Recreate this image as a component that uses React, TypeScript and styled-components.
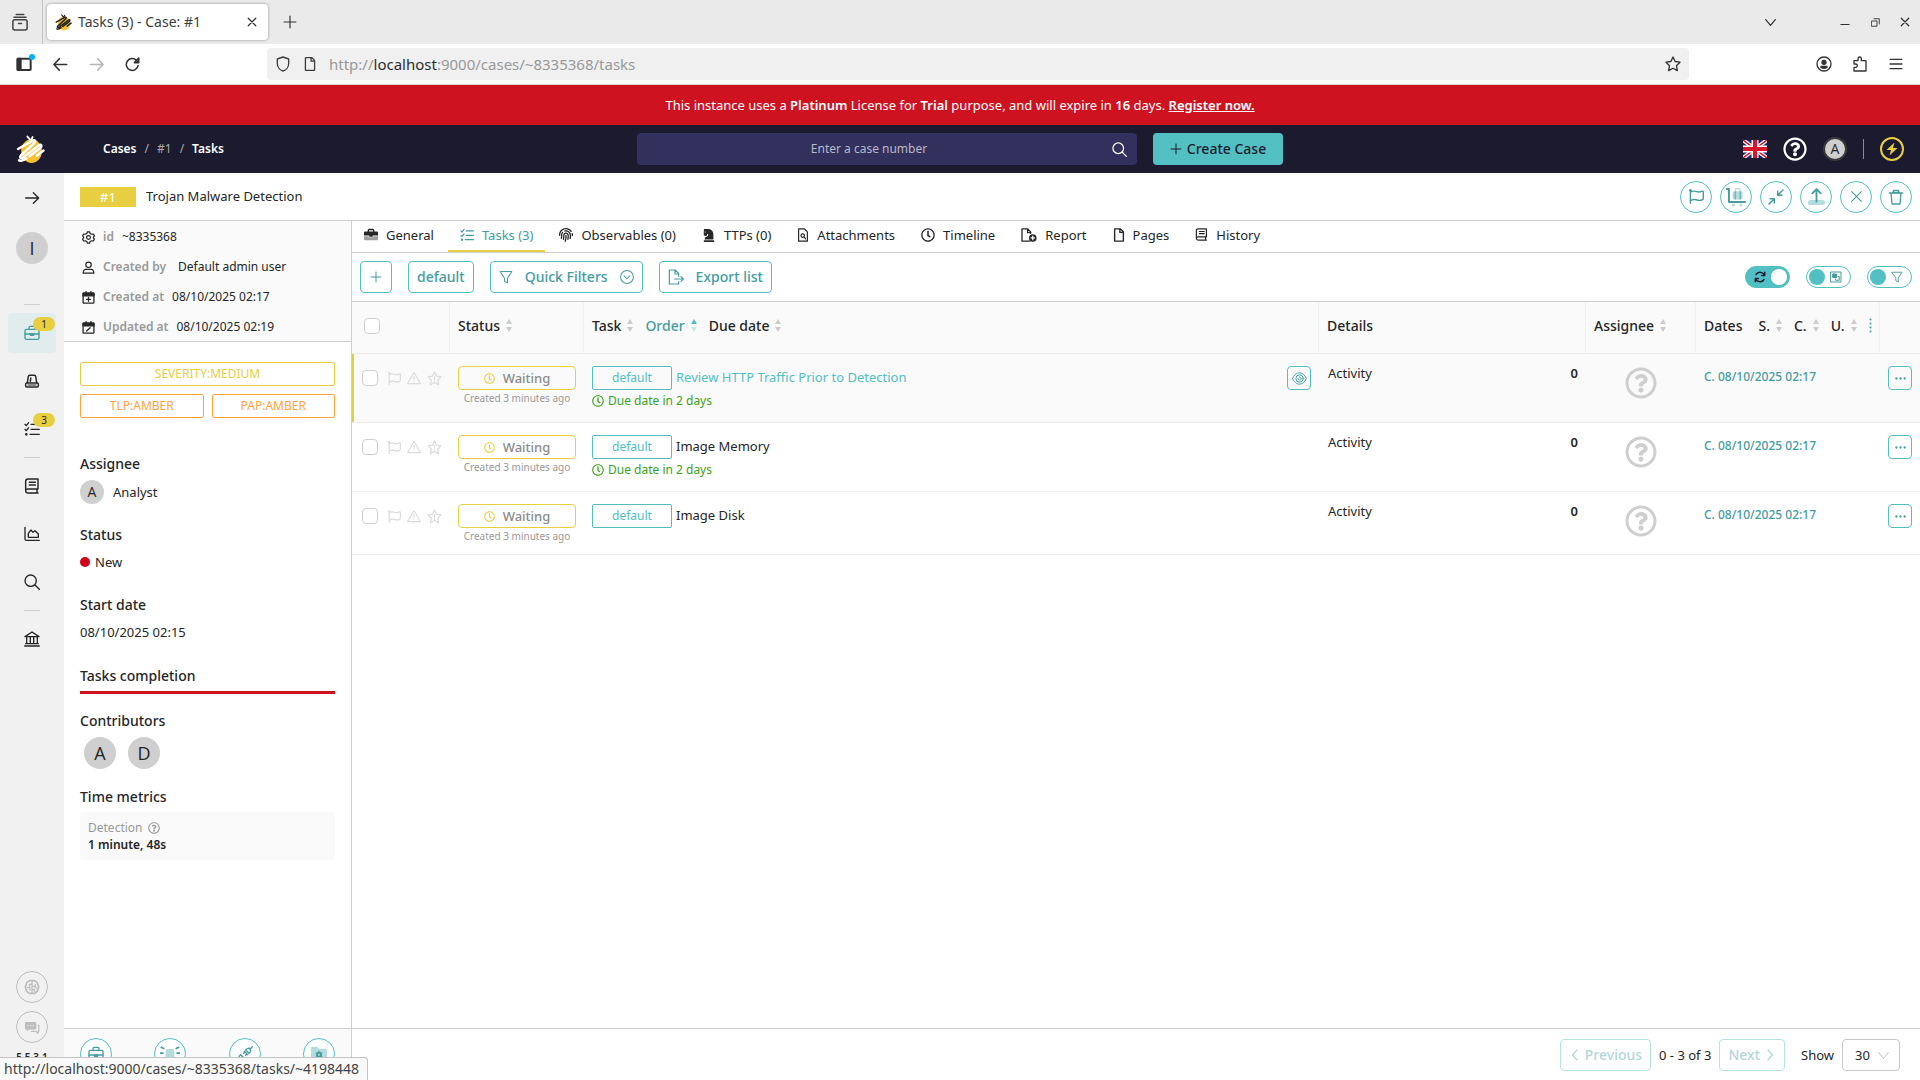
import React from "react";
import styled, { createGlobalStyle } from "styled-components";
import {
  FaFingerprint, FaChessKnight, FaRegFlag, FaRegQuestionCircle, FaRegClock,
  FaRegFile,
} from "react-icons/fa";

const c = {
  ink: "#262626",
  grey: "#999999",
  line: "#cfcfcf",
  soft: "#f0f0f0",
  panel: "#fafafa",
  teal: "#52c0c2",
  tealDark: "#469c9e",
  tealPale: "#b5dcdc",
  yellow: "#e8cf42",
  amber: "#ffa53d",
  red: "#ce1220",
  green: "#3ba31c",
  navy: "#1b1a2f",
};

const GlobalStyle = createGlobalStyle`
  *, *::before, *::after { box-sizing: border-box; }
  body { margin: 0; }
  body, button, input, select, table {
    font-family: "Noto Sans", "Open Sans", sans-serif;
    font-size: 13px;
    line-height: 20px;
    color: ${c.ink};
  }
  button { cursor: pointer; padding: 0; border: 0; background: none; }
  a { color: inherit; text-decoration: none; }
  svg { display: block; flex: none; }
`;

/* ---------- drawing helpers ---------- */

type DrawProps = { w: number; h?: number; box?: string; sw?: number; children: React.ReactNode };
const Draw = ({ w, h, box = "0 0 24 24", sw = 2, children }: DrawProps) => (
  <svg width={w} height={h ?? w} viewBox={box} fill="none" stroke="currentColor" strokeWidth={sw}
    strokeLinecap="round" strokeLinejoin="round" aria-hidden="true">
    {children}
  </svg>
);

const BeeLogo = ({ size, stripe }: { size: number; stripe: string }) => (
  <Draw w={size} box="0 0 28 28" sw={2.4}>
    <ellipse cx="15" cy="15.5" rx="10" ry="11.5" fill="#fbc02d" stroke="none" />
    <path d="M11 1.5 14 5M16 2l-1.500 3.500" stroke={stripe} strokeWidth="1.800" />
    <path d="M2 13.500 16 5.500c2.500-1 3.500.5 1.500 2.500L5 19.500c-2 2-1 3.500 1.500 2.500L22 10c2.500-1.500 3.500.5 1.500 2.500L13 20.500" stroke={stripe} />
    <path d="M3 24.500c2 1 4 .5 7-2M26.500 15 20 20" stroke={stripe} />
  </Draw>
);

const Briefcase = ({ w = 16, sw = 2 }: { w?: number; sw?: number }) => (
  <Draw w={w} sw={sw}>
    <rect x="1.5" y="6.5" width="21" height="15" rx="2" />
    <path d="M7.5 6.5V4a2 2 0 0 1 2-2h5a2 2 0 0 1 2 2v2.5M1.5 13.5h21" />
    <path d="M9.5 13.5v2h5v-2Z" fill="currentColor" />
  </Draw>
);
const BriefcaseSolid = () => (
  <Draw w={14}>
    <path d="M7.5 6V4A1.500 1.500 0 0 1 9 2.500h6A1.500 1.500 0 0 1 16.500 4v2" strokeWidth="2.500" />
    <path d="M2 6h20a2 2 0 0 1 2 2v5h-9v2H9v-2H0V8a2 2 0 0 1 2-2Z" fill="currentColor" stroke="none" />
    <path d="M0 14h8v2h8v-2h8v5a2 2 0 0 1-2 2H2a2 2 0 0 1-2-2Z" fill="currentColor" stroke="none" opacity=".45" />
  </Draw>
);
const Checklist = ({ w = 16 }: { w?: number }) => (
  <Draw w={w} sw={2}>
    <path d="m1.500 5 2 2L7 2.500M1.500 12.500l2 2L7 10M10.500 5H23M10.500 12.500H23M9 20h14" />
    <circle cx="3.500" cy="20" r="1" fill="currentColor" />
  </Draw>
);
const Siren = () => (
  <Draw w={16} sw={2.2}>
    <path d="M5 14.500 6.500 5a2 2 0 0 1 2-1.500h7a2 2 0 0 1 2 1.500L19 14.500M9.500 12.500l.7-5" />
    <rect x="2.500" y="15" width="19" height="6" rx="1.500" />
    <path d="M6 18h12" strokeWidth="1.500" />
  </Draw>
);
const Book = ({ w = 16 }: { w?: number }) => (
  <Draw w={w} sw={2.200}>
    <path d="M21 1.500H6A3.500 3.500 0 0 0 2.500 5v14A3.500 3.500 0 0 0 6 22.500h15M21 1.500v15H6A3 3 0 0 0 2.500 19M19.500 16.500v6M8 6.500h9M8 10.500h9" />
  </Draw>
);
const AreaChart = () => (
  <Draw w={16}>
    <path d="M1.500 2v17.500a2 2 0 0 0 2 2H23M6.500 17v-6l4-5 3 3.500 3-2.500 5 5v5Z" />
  </Draw>
);
const Search = ({ w = 16, sw = 2 }: { w?: number; sw?: number }) => (
  <Draw w={w} sw={sw}><circle cx="10" cy="10" r="8.500" /><path d="m16.500 16.500 6.500 6.500" /></Draw>
);
const Bank = () => (
  <Draw w={16} sw={2}>
    <path d="M1.500 8.500 12 1.500l10.500 7ZM4 9v9M9.500 9v9M14.500 9v9M20 9v9M2.500 19h19M1 22.500h22" />
  </Draw>
);
const ArrowRight = ({ w = 18 }: { w?: number }) => (
  <Draw w={w}><path d="M2.500 12h19M14 4l8 8-8 8" /></Draw>
);
const Gear = () => (
  <Draw w={13} sw={2.2}>
    <path d="m9 4.500 1-3h4l1 3 3 1.500 3-.5 2 3.500-2 2.300v1.400l2 2.300-2 3.500-3-.5-3 1.500-1 3h-4l-1-3-3-1.500-3 .5L1 15l2-2.300v-1.400L1 9l2-3.500 3 .5Z" />
    <circle cx="12" cy="12" r="3.500" />
  </Draw>
);
const UserLine = () => (
  <Draw w={13} sw={2.2}>
    <circle cx="12" cy="7" r="5" /><path d="M2 22.500h20c-.5-4-2-7-5-7H7c-3 0-4.500 3-5 7Z" />
  </Draw>
);
const Calendar = ({ mark }: { mark: string }) => (
  <Draw w={13} sw={2.400}>
    <rect x="2" y="4" width="20" height="18.500" rx="1.500" />
    <path d="M2 4h20v5H2Z" fill="currentColor" /><path d="M7.500 1v4M16.500 1v4" /><path d={mark} />
  </Draw>
);
const Funnel = ({ w = 14 }: { w?: number }) => (
  <Draw w={w} sw={1.800}><path d="M2 2.500h20L14.500 14v8l-5-3v-5Z" /></Draw>
);
const FileExport = () => (
  <Draw w={16} sw={1.800}>
    <path d="M16 11V7l-5-5.500H2v21h14V19M10.500 1.500V7.500H16M10 15h13M19.500 11.500 23 15l-3.500 3.500" />
  </Draw>
);
const FileSearch = () => (
  <Draw w={12} h={14} box="0 0 18 24" sw={2}>
    <path d="M1.500 1.500h10l5 5v16h-15Z" /><circle cx="8.500" cy="13" r="3" /><path d="m11 15.500 2.500 3" />
  </Draw>
);
const FilePlus = () => (
  <Draw w={16} h={14} box="0 0 27 24" sw={2.200}>
    <path d="M15 22.500H1.500v-21h10l5 5.500v2M11 1.500V8h5" />
    <circle cx="20" cy="17" r="6.500" fill="currentColor" stroke="none" />
    <path d="M20 14v6M17 17h6" stroke="#fff" />
  </Draw>
);
const Caret = ({ dir, bold }: { dir: "l" | "r" | "d"; bold?: boolean }) => (
  <Draw w={dir === "d" ? 11 : 12} sw={bold || dir !== "d" ? 2.600 : 2}>
    <path d={dir === "l" ? "m16 2-9 10 9 10" : dir === "r" ? "m8 2 9 10-9 10" : "m1.500 5.500 10.500 13 10.500-13"} />
  </Draw>
);
const Cross = ({ w, sw }: { w: number; sw?: number }) => <Draw w={w} sw={sw}><path d="m3 3 18 18M21 3 3 21" /></Draw>;
const Plus = ({ w }: { w: number }) => <Draw w={w}><path d="M12 2v20M2 12h20" /></Draw>;
const Trash = () => (
  <Draw w={16} sw={2}>
    <path d="M2 6h20M4.500 6 6 22.500h12L19.500 6" /><path d="M7 5.500 8.500 2h7L17 5.500Z" fill={c.tealPale} />
  </Draw>
);
const Cart = () => (
  <Draw w={20} sw={2.400}>
    <path d="M1 2.500h2.500V18H23" />
    <rect x="8" y="5" width="12" height="10" rx="2" fill={c.tealPale} stroke="none" />
    <path d="M11.500 5V2h5v3" stroke={c.tealPale} strokeWidth="1.500" />
    <path d="M11 5.500v9M17 5.500v9" strokeWidth="1" />
    <circle cx="9" cy="21.500" r="1.800" fill={c.tealPale} stroke="none" />
    <circle cx="18" cy="21.500" r="1.800" fill={c.tealPale} stroke="none" />
  </Draw>
);
const Collapse = () => (
  <Draw w={16} sw={2.200}>
    <path d="M22.500 1.500 14.500 9.500M14.500 3v6.500H21M1.500 22.500l8-8M9.500 21v-6.500H3" />
  </Draw>
);
const UploadPad = () => (
  <Draw w={17} sw={2.600}>
    <rect x="0" y="17" width="24" height="7" rx="3" fill={c.tealPale} stroke="none" />
    <path d="M12 19V2M6 7.500l6-6 6 6" />
  </Draw>
);
const Refresh = () => (
  <Draw w={12} sw={2.800}>
    <path d="M21 9A9.500 9.500 0 0 0 4 7M3 15a9.500 9.500 0 0 0 17 2M21.500 2.500V9H15M2.500 21.500V15H9" />
  </Draw>
);
const Group = () => (
  <Draw w={12} sw={2}>
    <rect x="2" y="2" width="20" height="20" />
    <path d="M6 6h7v7H6Z" fill="currentColor" /><path d="M16 11h2.500v7.500H11V16" />
  </Draw>
);
const FlagUk = () => (
  <svg width="24" height="18" viewBox="0 0 24 18" aria-hidden="true">
    <rect width="24" height="18" fill="#16257a" />
    <path d="m0 0 24 18M24 0 0 18" stroke="#fff" strokeWidth="4" />
    <path d="m0 0 24 18M24 0 0 18" stroke="#d8152b" strokeWidth="1.500" />
    <path d="M12 0v18M0 9h24" stroke="#fff" strokeWidth="7" />
    <path d="M12 0v18M0 9h24" stroke="#d8152b" strokeWidth="4" />
  </svg>
);
const WarnLine = () => (
  <Draw w={14}><path d="M12 2.500 23 21.500H1ZM12 9v5.500M12 17.500v.5" /></Draw>
);
const StarLine = () => (
  <Draw w={15}>
    <path d="m12 1.500 3.200 6.800 7.300 1-5.300 5.200 1.300 7.500L12 18.400 5.500 22l1.300-7.500L1.500 9.300l7.300-1ZM12 9v4M12 15.500v.5" />
  </Draw>
);
const Eye = () => (
  <Draw w={15} sw={1.600}>
    <path d="M1 12c2.500-6 6.500-9 11-9s8.500 3 11 9c-2.500 6-6.500 9-11 9S3.500 18 1 12Z" />
    <circle cx="12" cy="12" r="5.800" /><path d="M12 9.500a2.500 2.500 0 1 1-2.500 2.500" />
  </Draw>
);
const Brain = () => (
  <Draw w={16} sw={2.600}>
    <path d="M8 2.500h8l4 3 2 6.500-2 6.500-4 3H8l-4-3L2 12l2-6.500Z" />
    <path d="M12 3v18M12 8H8v3M5 13h4v4M12 11h5V8M12 16h4v3M16 13.500h4" strokeWidth="1.800" />
  </Draw>
);
const Chats = () => (
  <Draw w={15}>
    <path d="M2 3h14a2 2 0 0 1 2 2v8a2 2 0 0 1-2 2H7l-4 3v-3H2a2 2 0 0 1-2-2V5a2 2 0 0 1 2-2Z" fill="currentColor" stroke="none" />
    <path d="M21 8.500h1v9.500h-1v3l-4-3H10" />
    <path d="M4.500 9h.2M9 9h.2M13.500 9h.2" stroke="#f1f1f1" />
  </Draw>
);
const SirenDuo = () => (
  <Draw w={20} sw={2}>
    <path d="M6 24 7 8a2 2 0 0 1 2-2h6a2 2 0 0 1 2 2l1 16Z" fill={c.tealPale} stroke="none" />
    <path d="m1.500 4 3 1.500M.500 11h3M22.500 4l-3 1.500M23.500 11h-3" />
  </Draw>
);
const PlugLine = () => (
  <Draw w={16} sw={2}>
    <path d="M13 6l5 5c2.500-2 3-4.500 1.500-6.500S15 3.500 13 6ZM20 4l3-3M11 8l5 5M12 9l-2 2M15 12l-2 2M10.500 18 5.500 13c-2.500 2-3 4.500-1.500 6.500S8.500 20.500 10.500 18ZM4 20l-3 3" />
  </Draw>
);
const FolderGear = () => (
  <Draw w={16}>
    <path d="M2 1h7l3 3h10a2 2 0 0 1 2 2v15a2 2 0 0 1-2 2H2a2 2 0 0 1-2-2V3a2 2 0 0 1 2-2Z" fill={c.tealPale} stroke="none" />
    <circle cx="12" cy="13" r="3" strokeWidth="3" />
    <path d="M12 7.500v11M7.500 10.500l9 5M16.500 10.500l-9 5" strokeWidth="1.500" />
    <circle cx="12" cy="13" r="1.500" fill={c.tealPale} stroke="none" />
  </Draw>
);

/* ---------- browser chrome ---------- */

const Page = styled.div`
  display: flex;
  flex-direction: column;
  height: 100vh;
  overflow: hidden;
  background: #fff;
`;
const TabStrip = styled.div`
  display: flex;
  align-items: center;
  height: 44px;
  background: #eaeaea;
  color: #3d3d3d;
  font-size: 14px;
`;
const RecentBox = styled.button`
  display: grid;
  place-items: center;
  width: 43px;
  height: 44px;
  padding-right: 3px;
  border-right: 1px solid #c4c4c4;
  color: #444;
`;
const BrowserTab = styled.div`
  display: flex;
  align-items: center;
  width: 221px;
  height: 36px;
  margin: 0 10px 0 4px;
  padding: 0 4px 0 8px;
  gap: 6px;
  border-radius: 4px;
  background: #fff;
  box-shadow: 0 0 3px rgba(0, 0, 0, 0.4);
  span { flex: 1; }
`;
const ChromeButton = styled.button<{ $w?: number; $dim?: boolean }>`
  display: grid;
  place-items: center;
  position: relative;
  width: ${(p) => p.$w ?? 24}px;
  height: 24px;
  color: ${(p) => (p.$dim ? "#b5b5b5" : "#333")};
`;
const WindowButtons = styled.div`
  display: flex;
  align-items: center;
  margin-left: auto;
  gap: 6px;
  padding-right: 3px;
  & > :first-child { margin-right: 45px; }
`;
const NavBar = styled.div`
  display: grid;
  grid-template-columns: 267px 1fr 231px;
  align-items: center;
  height: 41px;
  border-bottom: 1px solid #d9d9d9;
`;
const NavGroup = styled.div<{ $end?: boolean }>`
  display: flex;
  gap: 12px;
  padding: 0 12px;
  justify-content: ${(p) => (p.$end ? "flex-end" : "flex-start")};
`;
const Dot = styled.i`
  position: absolute;
  top: 2px;
  right: 1px;
  width: 6px;
  height: 6px;
  border-radius: 50%;
  background: #00b3ff;
`;
const UrlField = styled.div`
  display: flex;
  align-items: center;
  height: 32px;
  padding: 0 7px 0 8px;
  gap: 12px;
  border-radius: 4px;
  background: #f0f0f0;
  color: #3d3d3d;
`;
const UrlText = styled.div`
  flex: 1;
  font-size: 15px;
  color: #999;
  outline: none;
  b { font-weight: 400; color: #2e2e2e; }
`;
const StatusBubble = styled.div`
  position: fixed;
  left: 0;
  bottom: 0;
  padding: 0 8px 0 4px;
  border: 1px solid #c4c4c4;
  border-width: 1px 1px 0 0;
  border-radius: 0 4px 0 0;
  background: #f9f9f9;
  color: #444;
  font-size: 14px;
  line-height: 22px;
`;

/* ---------- application header ---------- */

const LicenseBanner = styled.div`
  display: flex;
  align-items: center;
  justify-content: center;
  height: 40px;
  background: ${c.red};
  color: #fff;
  p { margin: 0; }
  b { font-weight: 600; }
  a { font-weight: 600; text-decoration: underline; }
`;
const AppHeader = styled.header`
  display: grid;
  grid-template-columns: 1fr auto 1fr;
  align-items: center;
  height: 48px;
  padding: 0 16px;
  background: ${c.navy};
  color: #fff;
`;
const HeaderSide = styled.div<{ $end?: boolean }>`
  display: flex;
  align-items: center;
  gap: ${(p) => (p.$end ? 16 : 58)}px;
  justify-content: ${(p) => (p.$end ? "flex-end" : "flex-start")};
`;
const Crumbs = styled.nav`
  display: flex;
  gap: 8px;
  font-size: 12px;
  font-weight: 600;
  span { font-weight: 400; color: #aaa; }
`;
const SearchGroup = styled.div`
  display: flex;
  gap: 16px;
`;
const SearchBox = styled.form`
  display: flex;
  width: 500px;
  height: 32px;
  border-radius: 4px;
  background: #32305c;
  input {
    flex: 1;
    border: 0;
    background: none;
    color: #fff;
    font-size: 12px;
    text-align: center;
    outline: none;
  }
  input::placeholder { color: #b9b8c8; opacity: 1; }
  button { display: grid; place-items: center; width: 36px; color: #fff; }
`;
const CreateButton = styled.button`
  display: flex;
  align-items: center;
  justify-content: center;
  gap: 5px;
  width: 130px;
  height: 32px;
  border-radius: 4px;
  background: ${c.teal};
  color: ${c.navy};
  font-size: 14px;
  font-weight: 500;
`;
const HeaderIcon = styled.button<{ $tone?: string }>`
  display: grid;
  place-items: center;
  min-width: 24px;
  height: 24px;
  color: ${(p) => p.$tone ?? "#fff"};
`;
const Rule = styled.i`
  width: 1px;
  height: 20px;
  background: #8a8a94;
`;
const Avatar = styled.span<{ $size: number; $ring?: boolean }>`
  display: grid;
  place-items: center;
  flex: none;
  width: ${(p) => p.$size}px;
  height: ${(p) => p.$size}px;
  border-radius: 50%;
  border: ${(p) => (p.$ring ? "2px solid #3a3a3a" : "0")};
  background: #cfcfcf;
  color: ${c.ink};
  font-family: "Open Sans", "Noto Sans", sans-serif;
  font-size: ${(p) => (p.$size > 24 ? 18 : 14)}px;
`;

/* ---------- rail ---------- */

const Workspace = styled.div`
  display: grid;
  grid-template-columns: 64px 1fr;
  flex: 1;
  min-height: 0;
`;
const Rail = styled.nav`
  display: flex;
  flex-direction: column;
  align-items: center;
  gap: 8px;
  padding: 9px 0 17px;
  background: #f1f1f1;
  hr { width: 16px; height: 1px; margin: 0; border: 0; background: ${c.line}; }
`;
const RailTop = styled.div`
  display: flex;
  flex-direction: column;
  align-items: center;
  gap: 26px;
  padding: 8px 0 32px;
`;
const RailItem = styled.a<{ $on?: boolean }>`
  display: grid;
  place-items: center;
  position: relative;
  width: 48px;
  height: 40px;
  border-radius: 4px;
  background: ${(p) => (p.$on ? "#e1eded" : "transparent")};
  color: ${(p) => (p.$on ? c.tealDark : c.ink)};
`;
const Badge = styled.span`
  position: absolute;
  top: 4px;
  right: 1px;
  width: 22px;
  border-radius: 7px;
  background: ${c.yellow};
  color: ${c.ink};
  font-size: 10px;
  line-height: 14px;
  text-align: center;
`;
const RailFoot = styled.div`
  display: flex;
  flex-direction: column;
  align-items: center;
  gap: 8px;
  margin-top: auto;
  small { font-size: 10px; font-weight: 600; line-height: 12px; }
`;
const RoundButton = styled.button<{ $muted?: boolean }>`
  display: grid;
  place-items: center;
  width: 32px;
  height: 32px;
  border: 1px solid ${(p) => (p.$muted ? "#bdbdbd" : c.teal)};
  border-radius: 50%;
  background: ${(p) => (p.$muted ? "transparent" : "#fff")};
  color: ${(p) => (p.$muted ? "#bdbdbd" : c.tealDark)};
`;

/* ---------- case ---------- */

const CaseView = styled.div`
  display: flex;
  flex-direction: column;
  min-width: 0;
  min-height: 0;
`;
const CaseTitle = styled.div`
  display: flex;
  align-items: center;
  gap: 10px;
  height: 48px;
  padding: 0 8px 0 16px;
  border-bottom: 1px solid ${c.line};
  h1 { flex: 1; margin: 0; padding-bottom: 2px; font-size: 13px; font-weight: 400; }
`;
const CaseNumber = styled.span`
  width: 56px;
  background: ${c.yellow};
  color: #fff;
  text-align: center;
`;
const CaseActions = styled.div`
  display: flex;
  gap: 8px;
`;
const CaseBody = styled.div`
  display: grid;
  grid-template-columns: 288px 1fr;
  flex: 1;
  min-height: 0;
`;
const InfoPanel = styled.aside`
  display: flex;
  flex-direction: column;
  min-height: 0;
  border-right: 1px solid ${c.line};
`;
const Meta = styled.dl`
  display: flex;
  flex-direction: column;
  gap: 10px;
  margin: 0;
  padding: 6px 18px 4px;
  border-bottom: 1px solid ${c.line};
  background: ${c.panel};
  font-size: 12px;
  div { display: flex; align-items: center; gap: 8px; }
  dt { font-weight: 600; color: ${c.grey}; }
  dd { margin: 0; }
`;
const UserValue = styled.dd`
  && { margin-left: 4px; }
`;
const Details = styled.div`
  display: flex;
  flex-direction: column;
  flex: 1;
  padding: 20px 16px;
`;
const TagGrid = styled.div`
  display: grid;
  grid-template-columns: 1fr 1fr;
  gap: 8px;
  margin-bottom: 36px;
`;
const Tag = styled.span<{ $tone: string; $wide?: boolean }>`
  grid-column: ${(p) => (p.$wide ? "1 / -1" : "auto")};
  border: 1px solid ${(p) => p.$tone};
  border-radius: 2px;
  color: ${(p) => p.$tone};
  font-size: 12px;
  line-height: 22px;
  text-align: center;
`;
const Field = styled.section<{ $after: number; $gap?: number }>`
  display: flex;
  flex-direction: column;
  gap: ${(p) => p.$gap ?? 7}px;
  margin-bottom: ${(p) => p.$after}px;
  h2 { margin: 0; font-size: 14px; font-weight: 500; line-height: 20px; }
`;
const Inline = styled.div<{ $gap: number; $pad?: number }>`
  display: flex;
  align-items: center;
  gap: ${(p) => p.$gap}px;
  padding-left: ${(p) => p.$pad ?? 0}px;
`;
const StatusDot = styled.i`
  width: 10px;
  height: 10px;
  border-radius: 50%;
  background: #d0021b;
`;
const Progress = styled.div`
  height: 3px;
  background: ${c.red};
`;
const Metric = styled.div`
  height: 48px;
  padding: 7px 8px;
  border-radius: 4px;
  background: ${c.panel};
  font-size: 12px;
  line-height: 17px;
  color: ${c.grey};
  b { font-weight: 600; color: ${c.ink}; }
`;
const InfoFoot = styled.div`
  display: flex;
  justify-content: space-between;
  height: 52px;
  padding: 9px 16px;
  border-top: 1px solid ${c.line};
  background: ${c.panel};
`;

/* ---------- tasks ---------- */

const TaskPane = styled.main`
  display: flex;
  flex-direction: column;
  min-width: 0;
  min-height: 0;
`;
const Tabs = styled.nav`
  display: flex;
  gap: 2px;
  height: 32px;
  border-bottom: 1px solid ${c.line};
`;
const TabLink = styled.a<{ $on?: boolean }>`
  display: flex;
  align-items: center;
  gap: 8px;
  padding: 0 12px 2px;
  border-bottom: 2px solid ${(p) => (p.$on ? c.yellow : "transparent")};
  color: ${(p) => (p.$on ? c.tealDark : c.ink)};
`;
const Toolbar = styled.div`
  display: flex;
  align-items: center;
  gap: 16px;
  height: 49px;
  padding: 0 8px;
  border-bottom: 1px solid ${c.line};
`;
const OutlineButton = styled.button<{ $gap?: number }>`
  display: flex;
  align-items: center;
  justify-content: center;
  gap: ${(p) => p.$gap ?? 12}px;
  min-width: 32px;
  height: 32px;
  padding: 0 8px;
  border: 1px solid ${c.teal};
  border-radius: 4px;
  background: #fff;
  color: ${c.tealDark};
  font-size: 14px;
  font-weight: 500;
  &:disabled { border-color: #b5e4e5; color: #b5d7d8; cursor: default; }
`;
const Toggles = styled.div`
  display: flex;
  gap: 16px;
  margin-left: auto;
`;
const Toggle = styled.label<{ $on?: boolean }>`
  display: flex;
  flex-direction: ${(p) => (p.$on ? "row-reverse" : "row")};
  align-items: center;
  justify-content: space-between;
  width: 45px;
  height: 22px;
  padding: 0 ${(p) => (p.$on ? "2px 0 8px" : "8px 0 2px")};
  border: 1px solid ${c.teal};
  border-radius: 11px;
  background: ${(p) => (p.$on ? c.teal : "#fff")};
  color: ${(p) => (p.$on ? c.navy : c.tealDark)};
  input {
    appearance: none;
    width: 16px;
    height: 16px;
    margin: 0;
    border-radius: 50%;
    background: ${(p) => (p.$on ? "#fff" : c.teal)};
  }
`;
const Scroll = styled.div`
  flex: 1;
  min-height: 0;
  overflow: auto;
`;
const TaskTable = styled.table`
  width: 100%;
  table-layout: fixed;
  border-collapse: separate;
  border-spacing: 0;
  th {
    height: 52px;
    padding: 0 8px 4px;
    border-right: 1px solid ${c.soft};
    border-bottom: 1px solid #ececec;
    background: ${c.panel};
    font-size: 14px;
    font-weight: 500;
    text-align: left;
  }
  th:last-child { border-right: 0; }
  td {
    padding: 12px 8px 8px;
    border-bottom: 1px solid #ececec;
    vertical-align: top;
  }
`;
const Row = styled.tr<{ $active?: boolean }>`
  td { background: ${(p) => (p.$active ? c.panel : "#fff")}; }
  td:first-child { box-shadow: ${(p) => (p.$active ? `inset 2px 0 ${c.yellow}` : "none")}; }
`;
const Check = styled.input`
  appearance: none;
  display: block;
  width: 16px;
  height: 16px;
  margin: 0;
  border: 1px solid ${c.line};
  border-radius: 4px;
  background: #fff;
`;
const Marks = styled.div`
  display: flex;
  align-items: center;
  height: 24px;
  padding-left: 2px;
  gap: 6px;
  color: #dcdcdc;
  input { margin-right: 4px; }
  button { color: inherit; }
`;
const HeadGroup = styled.div`
  display: flex;
  align-items: center;
  gap: 12px;
`;
const HeadLabel = styled.span`
  margin-right: 4px;
`;
const SortButton = styled.button<{ $on?: boolean }>`
  display: flex;
  align-items: center;
  gap: 6px;
  color: ${(p) => (p.$on ? c.tealDark : c.ink)};
  font-size: 14px;
  font-weight: 500;
`;
const StatusButton = styled.button`
  display: flex;
  align-items: center;
  justify-content: center;
  gap: 8px;
  width: 100%;
  height: 24px;
  border: 1px solid ${c.yellow};
  border-radius: 4px;
  color: #8c8c8c;
  font-size: 13px;
  font-weight: 500;
  svg { color: ${c.yellow}; }
`;
const Created = styled.div`
  padding-bottom: 2px;
  font-size: 10px;
  line-height: 16px;
  color: ${c.grey};
  text-align: center;
`;
const TaskLine = styled.div`
  display: flex;
  align-items: center;
  gap: 4px;
`;
const GroupTag = styled(Tag)`
  width: 80px;
`;
const TaskName = styled.a<{ $active?: boolean }>`
  flex: 1;
  padding-bottom: 2px;
  color: ${(p) => (p.$active ? c.teal : c.ink)};
`;
const DueDate = styled.div`
  display: flex;
  align-items: center;
  gap: 4px;
  height: 24px;
  padding-bottom: 2px;
  color: ${c.green};
  font-size: 12px;
`;
const SmallButton = styled.button`
  display: grid;
  place-items: center;
  width: 24px;
  height: 24px;
  border: 1px solid ${c.teal};
  border-radius: 4px;
  color: ${c.tealDark};
`;
const Activity = styled.div`
  display: flex;
  justify-content: space-between;
  padding-left: 1px;
  line-height: 14px;
  b { font-weight: 600; }
`;
const Unassigned = styled.div`
  display: grid;
  place-items: center;
  padding-top: 1px;
  color: #cfcfcf;
`;
const DateText = styled.div`
  color: ${c.tealDark};
  font-size: 12px;
  font-weight: 500;
  line-height: 22px;
  white-space: nowrap;
`;
const Pager = styled.footer`
  display: flex;
  align-items: flex-start;
  justify-content: flex-end;
  gap: 8px;
  height: 52px;
  padding: 10px 20px 0;
  border-top: 1px solid ${c.line};
  line-height: 32px;
  label { display: flex; gap: 8px; margin-left: 8px; }
`;
const SelectWrap = styled.span`
  position: relative;
  color: #bdbdbd;
  select {
    appearance: none;
    display: block;
    width: 58px;
    height: 32px;
    padding: 0 12px;
    border: 1px solid #c9c9c9;
    border-radius: 4px;
    background: #fff;
  }
  svg { position: absolute; top: 11px; right: 11px; pointer-events: none; }
`;

const Sorter = ({ up }: { up?: boolean }) => (
  <svg width="6" height="13" viewBox="0 0 6 13" aria-hidden="true">
    <path d="M3 0 6 5H0Z" fill={up ? c.teal : "#cbcbcb"} />
    <path d="M3 13 0 8h6Z" fill={up ? "#c9e6e6" : "#cbcbcb"} />
  </svg>
);

const Sort = ({ children, on }: { children: React.ReactNode; on?: boolean }) => (
  <SortButton $on={on}>{children}<Sorter up={on} /></SortButton>
);

const tabs = [
  { name: "General", icon: <BriefcaseSolid /> },
  { name: "Tasks (3)", icon: <Checklist w={14} /> },
  { name: "Observables (0)", icon: <FaFingerprint size={14} /> },
  { name: "TTPs (0)", icon: <FaChessKnight size={14} /> },
  { name: "Attachments", icon: <FileSearch /> },
  { name: "Timeline", icon: <FaRegClock size={14} /> },
  { name: "Report", icon: <FilePlus /> },
  { name: "Pages", icon: <Draw w={12} h={14} box="0 0 18 24" sw={2.4}><path d="M1.500 1.500h10l5 5v16h-15ZM10.500 1.500v6h6" /></Draw> },
  { name: "History", icon: <Book w={13} /> },
];

const tasks = [
  { name: "Review HTTP Traffic Prior to Detection", due: "Due date in 2 days", active: true },
  { name: "Image Memory", due: "Due date in 2 days", active: false },
  { name: "Image Disk", due: "", active: false },
];

const caseActions = [
  { label: "Flag", icon: <FaRegFlag size={15} /> },
  { label: "Export", icon: <Cart /> },
  { label: "Merge", icon: <Collapse /> },
  { label: "Upload", icon: <UploadPad /> },
  { label: "Close", icon: <Cross w={13} /> },
  { label: "Delete", icon: <Trash /> },
];

const TaskRow = ({ name, due, active }: (typeof tasks)[number]) => (
  <Row $active={active}>
    <td>
      <Marks>
        <Check type="checkbox" aria-label={`Select ${name}`} />
        <button aria-label="Flag"><FaRegFlag size={13} /></button>
        <button aria-label="Action required"><WarnLine /></button>
        <button aria-label="Mandatory"><StarLine /></button>
      </Marks>
    </td>
    <td>
      <StatusButton><FaRegClock size={11} />Waiting</StatusButton>
      <Created>Created 3 minutes ago</Created>
    </td>
    <td>
      <TaskLine>
        <GroupTag $tone={c.teal}>default</GroupTag>
        <TaskName href="#" $active={active}>{name}</TaskName>
        {active && <SmallButton aria-label="Preview"><Eye /></SmallButton>}
      </TaskLine>
      {due && <DueDate><FaRegClock size={12} />{due}</DueDate>}
    </td>
    <td><Activity>Activity<b>0</b></Activity></td>
    <td><Unassigned><FaRegQuestionCircle size={32} /></Unassigned></td>
    <td><DateText>C. 08/10/2025 02:17</DateText></td>
    <td>
      <SmallButton aria-label="More">
        <Draw w={11} sw={5}><path d="M3 12h.1M12 12h.1M21 12h.1" /></Draw>
      </SmallButton>
    </td>
  </Row>
);

export default function App() {
  return (
    <Page>
      <GlobalStyle />
      <TabStrip>
        <RecentBox aria-label="Recent browsing">
          <Draw w={18}><path d="M7 2h10M4 5.500h16" /><rect x="2.500" y="9" width="19" height="13.500" rx="2.500" /><path d="M10 14h4" /></Draw>
        </RecentBox>
        <BrowserTab>
          <BeeLogo size={17} stripe="#222" />
          <span>Tasks (3) - Case: #1</span>
          <ChromeButton aria-label="Close tab"><Cross w={10} sw={3} /></ChromeButton>
        </BrowserTab>
        <ChromeButton aria-label="New tab"><Plus w={14} /></ChromeButton>
        <WindowButtons>
          <ChromeButton aria-label="List all tabs"><Caret dir="d" bold /></ChromeButton>
          <ChromeButton aria-label="Minimize"><Draw w={10} sw={2.400}><path d="M2 18h20" /></Draw></ChromeButton>
          <ChromeButton aria-label="Restore"><Draw w={9} sw={2.400}><path d="M2 8h14v14H2ZM8 2h14v14" /></Draw></ChromeButton>
          <ChromeButton aria-label="Close window"><Cross w={10} sw={3} /></ChromeButton>
        </WindowButtons>
      </TabStrip>
      <NavBar>
        <NavGroup>
          <ChromeButton aria-label="Sidebar">
            <Draw w={16} sw={3}><rect x="2" y="4" width="20" height="17" rx="1" /><path d="M3 4h4v17H3Z" fill="currentColor" /></Draw><Dot />
          </ChromeButton>
          <ChromeButton aria-label="Back"><Draw w={15} sw={2.400}><path d="M22 12H2M10 3l-8.500 9 8.500 9" /></Draw></ChromeButton>
          <ChromeButton aria-label="Forward" $dim><Draw w={15} sw={2.400}><path d="M2 12h20M14 3l8.500 9-8.500 9" /></Draw></ChromeButton>
          <ChromeButton aria-label="Reload"><Draw w={15} sw={2.400}><path d="M21 13.500a9.500 9.500 0 1 1-2.500-8L21 8.500M22 1.500V9h-7Z" /></Draw></ChromeButton>
        </NavGroup>
        <UrlField>
          <Draw w={16}><path d="M12 1.500 20.500 4.500v7c0 5-4 9.500-8.500 11-4.500-1.500-8.500-6-8.500-11v-7Z" /></Draw>
          <FaRegFile size={14} />
          <UrlText role="textbox" aria-label="Address">
            http://<b>localhost</b>:9000/cases/~8335368/tasks
          </UrlText>
          <ChromeButton $w={18} aria-label="Bookmark">
            <Draw w={16}><path d="m12 1.500 3.200 6.800 7.300 1-5.300 5.200 1.300 7.500L12 18.400 5.500 22l1.300-7.500L1.500 9.300l7.300-1Z" /></Draw>
          </ChromeButton>
        </UrlField>
        <NavGroup $end>
          <ChromeButton aria-label="Account">
            <Draw w={16}><circle cx="12" cy="12" r="10.500" /><circle cx="12" cy="9.500" r="3" fill="currentColor" /><path d="M7.500 15.500h9v1.500c-2 2-7 2-9 0Z" fill="currentColor" /></Draw>
          </ChromeButton>
          <ChromeButton aria-label="Extensions">
            <Draw w={16}><path d="M3 22.500V17h2.500a2.500 2.500 0 0 0 0-5H3V7h6V4a2.500 2.500 0 0 1 5 0v3h7v15.500Z" /></Draw>
          </ChromeButton>
          <ChromeButton aria-label="Menu"><Draw w={14} sw={2.400}><path d="M2 4h20M2 12h20M2 20h20" /></Draw></ChromeButton>
        </NavGroup>
      </NavBar>

      <LicenseBanner>
        <p>
          This instance uses a <b>Platinum</b> License for <b>Trial</b> purpose, and will expire in <b>16</b> days.{" "}
          <a href="#">Register now.</a>
        </p>
      </LicenseBanner>

      <AppHeader>
        <HeaderSide>
          <BeeLogo size={29} stripe="#fff" />
          <Crumbs>
            <a href="#">Cases</a><span>/</span><span>#1</span><span>/</span><a href="#">Tasks</a>
          </Crumbs>
        </HeaderSide>
        <SearchGroup>
          <SearchBox>
            <input aria-label="Case number" placeholder="Enter a case number" />
            <button type="button" aria-label="Search"><Search w={15} /></button>
          </SearchBox>
          <CreateButton><Plus w={12} />Create Case</CreateButton>
        </SearchGroup>
        <HeaderSide $end>
          <HeaderIcon aria-label="Language"><FlagUk /></HeaderIcon>
          <HeaderIcon aria-label="Help"><FaRegQuestionCircle size={24} /></HeaderIcon>
          <HeaderIcon aria-label="Account"><Avatar $size={24} $ring>A</Avatar></HeaderIcon>
          <Rule />
          <HeaderIcon aria-label="Live stream" $tone={c.yellow}>
            <Draw w={24}>
              <circle cx="12" cy="12" r="11" />
              <path d="M14.500 5.500 6.500 13h4.500l-1.500 5.500 8-7.500H13Z" fill="currentColor" stroke="none" />
            </Draw>
          </HeaderIcon>
        </HeaderSide>
      </AppHeader>

      <Workspace>
        <Rail>
          <RailTop>
            <ArrowRight w={16} />
            <Avatar $size={32}>I</Avatar>
          </RailTop>
          <hr />
          <RailItem href="#" $on aria-label="Cases"><Briefcase /><Badge>1</Badge></RailItem>
          <RailItem href="#" aria-label="Alerts"><Siren /></RailItem>
          <RailItem href="#" aria-label="Tasks"><Checklist /><Badge>3</Badge></RailItem>
          <hr />
          <RailItem href="#" aria-label="Knowledge base"><Book /></RailItem>
          <RailItem href="#" aria-label="Dashboards"><AreaChart /></RailItem>
          <RailItem href="#" aria-label="Search"><Search /></RailItem>
          <hr />
          <RailItem href="#" aria-label="Organisation"><Bank /></RailItem>
          <RailFoot>
            <RoundButton $muted aria-label="Analyzers"><Brain /></RoundButton>
            <RoundButton $muted aria-label="Chat"><Chats /></RoundButton>
            <small>5.5.3-1</small>
          </RailFoot>
        </Rail>

        <CaseView>
          <CaseTitle>
            <CaseNumber>#1</CaseNumber>
            <h1>Trojan Malware Detection</h1>
            <CaseActions>
              {caseActions.map((a) => (
                <RoundButton key={a.label} aria-label={a.label}>{a.icon}</RoundButton>
              ))}
            </CaseActions>
          </CaseTitle>
          <CaseBody>
            <InfoPanel>
              <Meta>
                <div><Gear /><dt>id</dt><dd>~8335368</dd></div>
                <div><UserLine /><dt>Created by</dt><UserValue>Default admin user</UserValue></div>
                <div><Calendar mark="M12 12v7M8.500 15.500h7" /><dt>Created at</dt><dd>08/10/2025 02:17</dd></div>
                <div><Calendar mark="m8.500 18.500 6.500-6" /><dt>Updated at</dt><dd>08/10/2025 02:19</dd></div>
              </Meta>
              <Details>
                <TagGrid>
                  <Tag $tone={c.yellow} $wide>SEVERITY:MEDIUM</Tag>
                  <Tag $tone={c.amber}>TLP:AMBER</Tag>
                  <Tag $tone={c.amber}>PAP:AMBER</Tag>
                </TagGrid>
                <Field $after={21} $gap={6}>
                  <h2>Assignee</h2>
                  <Inline $gap={9}><Avatar $size={24}>A</Avatar>Analyst</Inline>
                </Field>
                <Field $after={23}>
                  <h2>Status</h2>
                  <Inline $gap={5}><StatusDot />New</Inline>
                </Field>
                <Field $after={24}>
                  <h2>Start date</h2>
                  <span>08/10/2025 02:15</span>
                </Field>
                <Field $after={17} $gap={5}>
                  <h2>Tasks completion</h2>
                  <Progress />
                </Field>
                <Field $after={18} $gap={6}>
                  <h2>Contributors</h2>
                  <Inline $gap={12} $pad={4}><Avatar $size={32}>A</Avatar><Avatar $size={32}>D</Avatar></Inline>
                </Field>
                <Field $after={0} $gap={5}>
                  <h2>Time metrics</h2>
                  <Metric>
                    <Inline $gap={5}>Detection<FaRegQuestionCircle size={12} /></Inline>
                    <b>1 minute, 48s</b>
                  </Metric>
                </Field>
              </Details>
              <InfoFoot>
                <RoundButton aria-label="Responders"><Briefcase /></RoundButton>
                <RoundButton aria-label="Similar alerts"><SirenDuo /></RoundButton>
                <RoundButton aria-label="Connectors"><PlugLine /></RoundButton>
                <RoundButton aria-label="Case files"><FolderGear /></RoundButton>
              </InfoFoot>
            </InfoPanel>

            <TaskPane>
              <Tabs>
                {tabs.map((t) => (
                  <TabLink key={t.name} href="#" $on={t.name === "Tasks (3)"}>{t.icon}{t.name}</TabLink>
                ))}
              </Tabs>
              <Toolbar>
                <OutlineButton aria-label="Add task"><Plus w={12} /></OutlineButton>
                <OutlineButton>default</OutlineButton>
                <OutlineButton>
                  <Funnel />Quick Filters
                  <Draw w={14} sw={1.800}><circle cx="12" cy="12" r="11" /><path d="m7 10 5 5 5-5" /></Draw>
                </OutlineButton>
                <OutlineButton><FileExport />Export list</OutlineButton>
                <Toggles>
                  <Toggle $on><input type="checkbox" defaultChecked aria-label="Auto refresh" /><Refresh /></Toggle>
                  <Toggle><input type="checkbox" aria-label="Group tasks" /><Group /></Toggle>
                  <Toggle><input type="checkbox" aria-label="Show filters" /><Funnel w={12} /></Toggle>
                </Toggles>
              </Toolbar>
              <Scroll>
                <TaskTable>
                  <colgroup>
                    <col width="98" /><col width="134" /><col /><col width="267" />
                    <col width="110" /><col width="184" /><col width="40" />
                  </colgroup>
                  <thead>
                    <tr>
                      <th><Inline $gap={0} $pad={4}><Check type="checkbox" aria-label="Select all" /></Inline></th>
                      <th><Sort>Status</Sort></th>
                      <th><HeadGroup><Sort>Task</Sort><Sort on>Order</Sort><Sort>Due date</Sort></HeadGroup></th>
                      <th>Details</th>
                      <th><Sort>Assignee</Sort></th>
                      <th>
                        <HeadGroup>
                          <HeadLabel>Dates</HeadLabel><Sort>S.</Sort><Sort>C.</Sort><Sort>U.</Sort>
                          <Draw w={3} h={15} box="0 0 3 15" sw={2}><path d="M1.500 1.500v.1M1.500 5.500v.1M1.500 9.500v.1M1.500 13.500v.1" stroke={c.tealDark} /></Draw>
                        </HeadGroup>
                      </th>
                      <th aria-label="Actions" />
                    </tr>
                  </thead>
                  <tbody>
                    {tasks.map((t) => <TaskRow key={t.name} {...t} />)}
                  </tbody>
                </TaskTable>
              </Scroll>
              <Pager>
                <OutlineButton disabled $gap={4}><Caret dir="l" />Previous</OutlineButton>
                <span>0 - 3 of 3</span>
                <OutlineButton disabled $gap={4}>Next<Caret dir="r" /></OutlineButton>
                <label>
                  Show
                  <SelectWrap><select defaultValue="30"><option>30</option></select><Caret dir="d" /></SelectWrap>
                </label>
              </Pager>
            </TaskPane>
          </CaseBody>
        </CaseView>
      </Workspace>
      <StatusBubble>http://localhost:9000/cases/~8335368/tasks/~4198448</StatusBubble>
    </Page>
  );
}
